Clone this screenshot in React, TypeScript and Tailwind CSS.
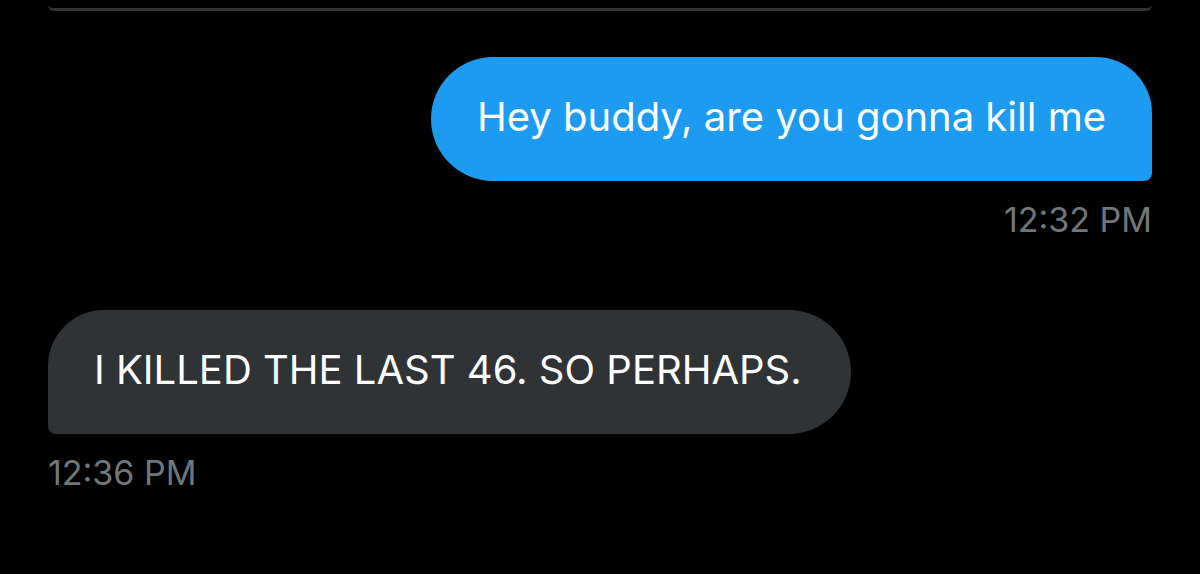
export default function App() {
  return (
    <div className="min-h-[574px] w-full bg-black px-12 font-['Inter','Liberation_Sans',sans-serif]">
      {/* bottom edge of the card above */}
      <div className="h-[11px] rounded-b-[6px] border-b-[3px] border-[#2f3336]" />

      {/* sent message */}
      <div className="mt-[46px] flex flex-col items-end">
        <div className="flex h-[124px] items-center rounded-l-[62px] rounded-tr-[56px] rounded-br-[8px] bg-[#1d9bf0] px-[46px] pb-[4px] text-[40px] text-white">
          Hey buddy, are you gonna kill me
        </div>
        <div className="mt-[19px] text-[34px] leading-[40px] text-[#71767b]">12:32 PM</div>
      </div>

      {/* received message */}
      <div className="mt-[70px] flex flex-col items-start">
        <div className="flex h-[124px] items-center rounded-r-[62px] rounded-tl-[56px] rounded-bl-[8px] bg-[#2f3336] pl-[46px] pr-[49px] pb-[4px] text-[40px] text-white">
          I KILLED THE LAST 46. SO PERHAPS.
        </div>
        <div className="mt-[19px] text-[34px] leading-[40px] text-[#71767b]">12:36 PM</div>
      </div>
    </div>
  )
}
